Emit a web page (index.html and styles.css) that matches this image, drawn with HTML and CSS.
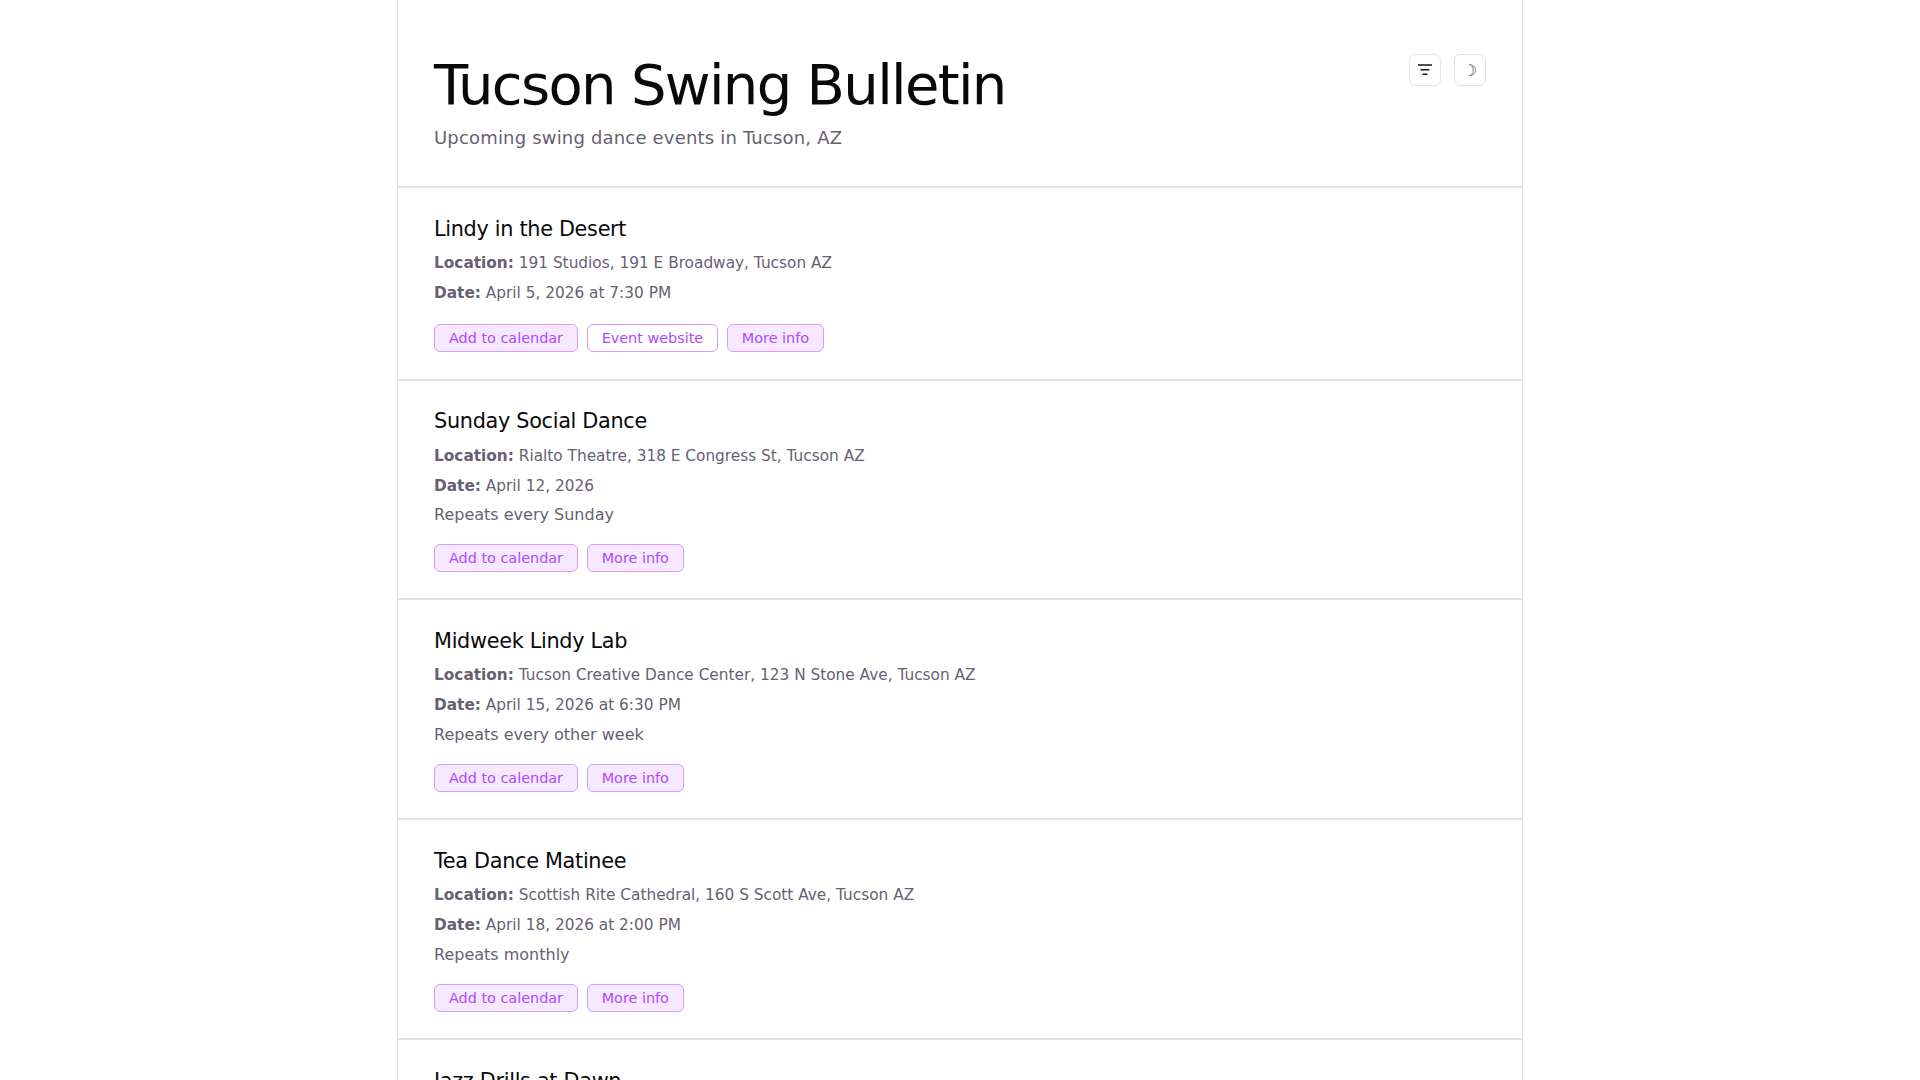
FILE: index.html
```html
<!DOCTYPE html>
<html lang="en">
<head>
<meta charset="utf-8">
<title>Tucson Swing Bulletin</title>
<link rel="stylesheet" href="styles.css">
</head>
<body>
<main class="page">
  <header class="head">
    <div>
      <h1>Tucson Swing Bulletin</h1>
      <p class="sub">Upcoming swing dance events in Tucson, AZ</p>
    </div>
    <div class="tools">
      <button class="tool" aria-label="Filter"><svg width="14" height="12" viewBox="0 0 14 12"><path d="M0 1h14M2.5 5.7h9M4.5 10.3h5" stroke="#18181b" stroke-width="1.6" fill="none"/></svg></button>
      <button class="tool moon" aria-label="Theme">☽</button>
    </div>
  </header>
  <article class="event">
    <h2>Lindy in the Desert</h2>
    <p class="line"><strong>Location:</strong> 191 Studios, 191 E Broadway, Tucson AZ</p>
    <p class="line"><strong>Date:</strong> April 5, 2026 at 7:30 PM</p>
    <div class="actions"><a class="btn">Add to calendar</a><a class="btn plain">Event website</a><a class="btn">More info</a></div>
  </article>
  <article class="event">
    <h2>Sunday Social Dance</h2>
    <p class="line"><strong>Location:</strong> Rialto Theatre, 318 E Congress St, Tucson AZ</p>
    <p class="line"><strong>Date:</strong> April 12, 2026</p>
    <p class="repeat">Repeats every Sunday</p>
    <div class="actions"><a class="btn">Add to calendar</a><a class="btn">More info</a></div>
  </article>
  <article class="event">
    <h2>Midweek Lindy Lab</h2>
    <p class="line"><strong>Location:</strong> Tucson Creative Dance Center, 123 N Stone Ave, Tucson AZ</p>
    <p class="line"><strong>Date:</strong> April 15, 2026 at 6:30 PM</p>
    <p class="repeat">Repeats every other week</p>
    <div class="actions"><a class="btn">Add to calendar</a><a class="btn">More info</a></div>
  </article>
  <article class="event">
    <h2>Tea Dance Matinee</h2>
    <p class="line"><strong>Location:</strong> Scottish Rite Cathedral, 160 S Scott Ave, Tucson AZ</p>
    <p class="line"><strong>Date:</strong> April 18, 2026 at 2:00 PM</p>
    <p class="repeat">Repeats monthly</p>
    <div class="actions"><a class="btn">Add to calendar</a><a class="btn">More info</a></div>
  </article>
  <article class="event">
    <h2>Jazz Drills at Dawn</h2>
  </article>
</main>
</body>
</html>
```
FILE: styles.css
```css
html, body { margin: 0; padding: 0; background: #fff; height: 100%; overflow: hidden; }
body { font-family: "DejaVu Sans", sans-serif; color: #09090b; }
.page { width: 1126px; margin: 0 auto; box-sizing: border-box; border-left: 1px solid #e4e4e7; border-right: 1px solid #e4e4e7; min-height: 1080px; }
.head { display: flex; justify-content: space-between; align-items: flex-start; padding: 48px 36px 36px; border-bottom: 2px solid #e4e4e7; height: 188px; box-sizing: border-box; }
h1 { margin: 0; font-size: 56px; font-weight: 400; line-height: 74px; letter-spacing: -0.03em; }
.sub { margin: 2px 0 0; font-size: 18px; line-height: 27px; letter-spacing: 0.01em; color: #675f73; }
.tools { display: flex; gap: 13px; margin-top: 6px; }
.tool { width: 32px; height: 32px; padding: 0; background: #fff; border: 1px solid #e4e4e7; border-radius: 6px; display: flex; align-items: center; justify-content: center; }
.moon { font-family: "DejaVu Sans", sans-serif; font-size: 16px; color: #3f3f46; }
.event { padding: 25.5px 36px 26.5px; border-bottom: 2px solid #e4e4e7; }
h2 { margin: 0 0 7.5px; font-size: 20.8px; font-weight: 400; line-height: 30px; letter-spacing: -0.015em; }
.line { margin: 0 0 6px; font-size: 15.34px; line-height: 24px; color: #675f73; }
.line strong { font-weight: 700; }
.repeat { margin: 0; padding: 1.2px 0 1.3px; font-size: 16px; line-height: 19px; color: #675f73; }
.actions { display: flex; gap: 8.64px; margin-top: 19px; }
.btn { font-size: 14.4px; line-height: 16px; padding: 5px 14px; color: #b04aff; background: #f6e8ff; border: 1px solid #d59bff; border-radius: 6px; }
.plain { background: #fff; }
```
